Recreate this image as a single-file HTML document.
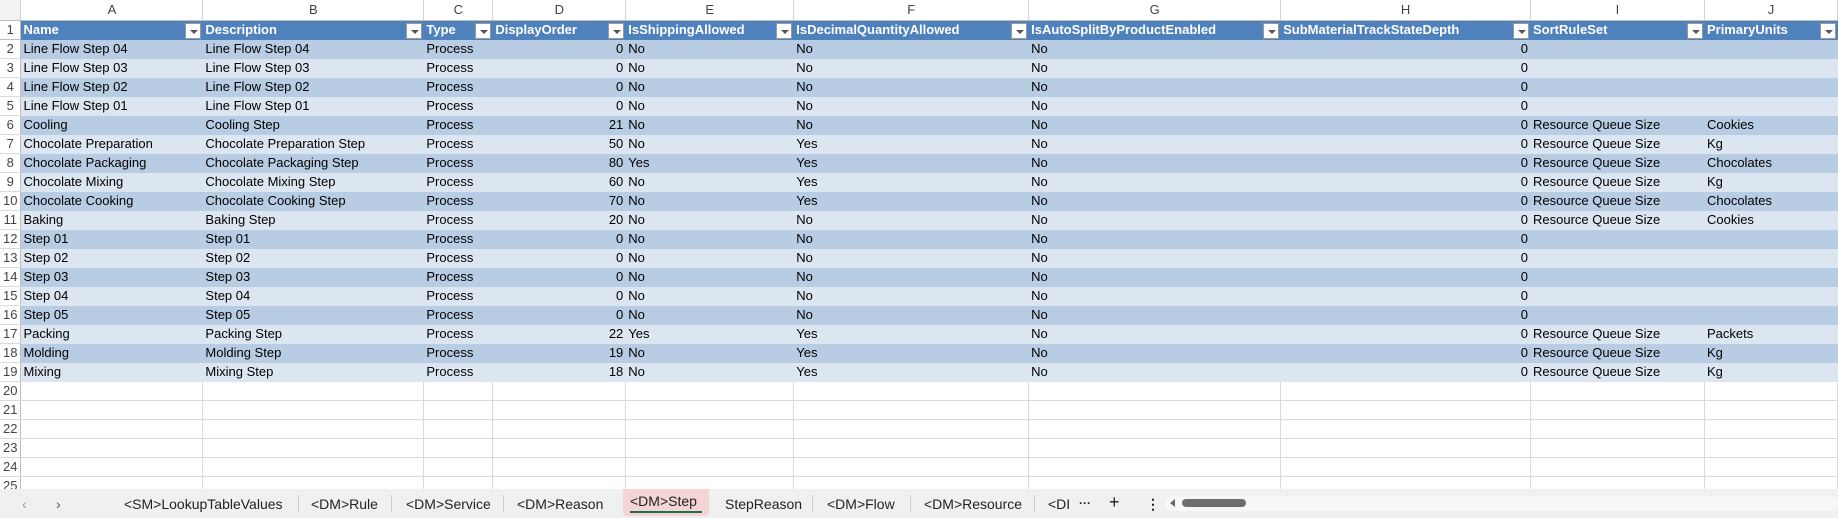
<!DOCTYPE html><html><head><meta charset="utf-8"><style>
*{margin:0;padding:0;box-sizing:border-box}
body{width:1838px;height:518px;overflow:hidden;background:#fff;font-family:"Liberation Sans",sans-serif;position:relative}
.g{position:absolute;left:0;top:0}
table{border-collapse:collapse;table-layout:fixed}
td{height:19px;font-size:13px;white-space:nowrap;overflow:hidden;padding:0 2px;color:#000;border-right:1px solid #dadada;border-bottom:1px solid #dadada;position:relative}
tr.ch td{height:20px;background:#fff;color:#444;text-align:center;font-size:13px;border-right:1px solid #d4d4d4;border-bottom:1px solid #bdbdbd}
td.rn{background:#fff;color:#444;text-align:center;padding:0;border-right:1px solid #bdbdbd}
tr.h td{background:#4f81bd;color:#fff;font-weight:bold;border-color:#4f81bd}
tr.h td.rn{background:#fff;color:#444;font-weight:normal;border-color:#bdbdbd}
tr.a td{background:#b8cce4;border-color:#b8cce4}
tr.b td{background:#dce6f1;border-color:#dce6f1}
tr.a td.rn,tr.b td.rn{background:#fff;border-right-color:#bdbdbd;border-bottom-color:#dadada}
.r{text-align:right}
.dd{position:absolute;right:1px;top:2px;width:16px;height:16px;background:#fff;border:1px solid #999}
.dd:after{content:"";position:absolute;left:4px;top:6px;border-left:4px solid transparent;border-right:4px solid transparent;border-top:4px solid #555}
.tb{position:absolute;left:0;top:489px;width:1838px;height:29px;background:#f0f0f0;font-size:14px;color:#222}
.tb span{position:absolute;top:7px}
.sep{position:absolute;top:6px;width:1px;height:17px;background:#ccc}
</style></head><body>
<table class="g">
<colgroup><col style="width:21px"><col style="width:182px"><col style="width:221px"><col style="width:69px"><col style="width:133px"><col style="width:168px"><col style="width:235px"><col style="width:252px"><col style="width:250px"><col style="width:174px"><col style="width:133px"></colgroup>
<tr class="ch"><td class="rn" style="background:#f3f3f3"></td><td>A</td><td>B</td><td>C</td><td>D</td><td>E</td><td>F</td><td>G</td><td>H</td><td>I</td><td>J</td></tr>
<tr class="h"><td class="rn">1</td><td>Name<i class="dd"></i></td><td>Description<i class="dd"></i></td><td>Type<i class="dd"></i></td><td>DisplayOrder<i class="dd"></i></td><td>IsShippingAllowed<i class="dd"></i></td><td>IsDecimalQuantityAllowed<i class="dd"></i></td><td>IsAutoSplitByProductEnabled<i class="dd"></i></td><td>SubMaterialTrackStateDepth<i class="dd"></i></td><td>SortRuleSet<i class="dd"></i></td><td>PrimaryUnits<i class="dd"></i></td></tr>
<tr class="a"><td class="rn">2</td><td>Line Flow Step 04</td><td>Line Flow Step 04</td><td>Process</td><td class="r">0</td><td>No</td><td>No</td><td>No</td><td class="r">0</td><td></td><td></td></tr>
<tr class="b"><td class="rn">3</td><td>Line Flow Step 03</td><td>Line Flow Step 03</td><td>Process</td><td class="r">0</td><td>No</td><td>No</td><td>No</td><td class="r">0</td><td></td><td></td></tr>
<tr class="a"><td class="rn">4</td><td>Line Flow Step 02</td><td>Line Flow Step 02</td><td>Process</td><td class="r">0</td><td>No</td><td>No</td><td>No</td><td class="r">0</td><td></td><td></td></tr>
<tr class="b"><td class="rn">5</td><td>Line Flow Step 01</td><td>Line Flow Step 01</td><td>Process</td><td class="r">0</td><td>No</td><td>No</td><td>No</td><td class="r">0</td><td></td><td></td></tr>
<tr class="a"><td class="rn">6</td><td>Cooling</td><td>Cooling Step</td><td>Process</td><td class="r">21</td><td>No</td><td>No</td><td>No</td><td class="r">0</td><td>Resource Queue Size</td><td>Cookies</td></tr>
<tr class="b"><td class="rn">7</td><td>Chocolate Preparation</td><td>Chocolate Preparation Step</td><td>Process</td><td class="r">50</td><td>No</td><td>Yes</td><td>No</td><td class="r">0</td><td>Resource Queue Size</td><td>Kg</td></tr>
<tr class="a"><td class="rn">8</td><td>Chocolate Packaging</td><td>Chocolate Packaging Step</td><td>Process</td><td class="r">80</td><td>Yes</td><td>Yes</td><td>No</td><td class="r">0</td><td>Resource Queue Size</td><td>Chocolates</td></tr>
<tr class="b"><td class="rn">9</td><td>Chocolate Mixing</td><td>Chocolate Mixing Step</td><td>Process</td><td class="r">60</td><td>No</td><td>Yes</td><td>No</td><td class="r">0</td><td>Resource Queue Size</td><td>Kg</td></tr>
<tr class="a"><td class="rn">10</td><td>Chocolate Cooking</td><td>Chocolate Cooking Step</td><td>Process</td><td class="r">70</td><td>No</td><td>Yes</td><td>No</td><td class="r">0</td><td>Resource Queue Size</td><td>Chocolates</td></tr>
<tr class="b"><td class="rn">11</td><td>Baking</td><td>Baking Step</td><td>Process</td><td class="r">20</td><td>No</td><td>No</td><td>No</td><td class="r">0</td><td>Resource Queue Size</td><td>Cookies</td></tr>
<tr class="a"><td class="rn">12</td><td>Step 01</td><td>Step 01</td><td>Process</td><td class="r">0</td><td>No</td><td>No</td><td>No</td><td class="r">0</td><td></td><td></td></tr>
<tr class="b"><td class="rn">13</td><td>Step 02</td><td>Step 02</td><td>Process</td><td class="r">0</td><td>No</td><td>No</td><td>No</td><td class="r">0</td><td></td><td></td></tr>
<tr class="a"><td class="rn">14</td><td>Step 03</td><td>Step 03</td><td>Process</td><td class="r">0</td><td>No</td><td>No</td><td>No</td><td class="r">0</td><td></td><td></td></tr>
<tr class="b"><td class="rn">15</td><td>Step 04</td><td>Step 04</td><td>Process</td><td class="r">0</td><td>No</td><td>No</td><td>No</td><td class="r">0</td><td></td><td></td></tr>
<tr class="a"><td class="rn">16</td><td>Step 05</td><td>Step 05</td><td>Process</td><td class="r">0</td><td>No</td><td>No</td><td>No</td><td class="r">0</td><td></td><td></td></tr>
<tr class="b"><td class="rn">17</td><td>Packing</td><td>Packing Step</td><td>Process</td><td class="r">22</td><td>Yes</td><td>Yes</td><td>No</td><td class="r">0</td><td>Resource Queue Size</td><td>Packets</td></tr>
<tr class="a"><td class="rn">18</td><td>Molding</td><td>Molding Step</td><td>Process</td><td class="r">19</td><td>No</td><td>Yes</td><td>No</td><td class="r">0</td><td>Resource Queue Size</td><td>Kg</td></tr>
<tr class="b"><td class="rn">19</td><td>Mixing</td><td>Mixing Step</td><td>Process</td><td class="r">18</td><td>No</td><td>Yes</td><td>No</td><td class="r">0</td><td>Resource Queue Size</td><td>Kg</td></tr>
<tr><td class="rn">20</td><td></td><td></td><td></td><td></td><td></td><td></td><td></td><td></td><td></td><td></td></tr>
<tr><td class="rn">21</td><td></td><td></td><td></td><td></td><td></td><td></td><td></td><td></td><td></td><td></td></tr>
<tr><td class="rn">22</td><td></td><td></td><td></td><td></td><td></td><td></td><td></td><td></td><td></td><td></td></tr>
<tr><td class="rn">23</td><td></td><td></td><td></td><td></td><td></td><td></td><td></td><td></td><td></td><td></td></tr>
<tr><td class="rn">24</td><td></td><td></td><td></td><td></td><td></td><td></td><td></td><td></td><td></td><td></td></tr>
<tr><td class="rn">25</td><td></td><td></td><td></td><td></td><td></td><td></td><td></td><td></td><td></td><td></td></tr>
</table>
<div class="tb">
<span style="left:22px;color:#999">&#x2039;</span><span style="left:56px;color:#555">&#x203A;</span>
<span style="left:124px">&lt;SM&gt;LookupTableValues</span><div class="sep" style="left:298px"></div>
<span style="left:311px">&lt;DM&gt;Rule</span><div class="sep" style="left:391px"></div>
<span style="left:406px">&lt;DM&gt;Service</span><div class="sep" style="left:503px"></div>
<span style="left:517px">&lt;DM&gt;Reason</span>
<div style="position:absolute;left:623px;top:0;width:86px;height:27px;background:#f4d4d4;border-radius:0 0 4px 4px"></div>
<span style="left:630px;top:4px">&lt;DM&gt;Step</span>
<div style="position:absolute;left:630px;top:22px;width:72px;height:2px;background:#1e7145"></div>
<span style="left:725px">StepReason</span><div class="sep" style="left:812px"></div>
<span style="left:827px">&lt;DM&gt;Flow</span><div class="sep" style="left:910px"></div>
<span style="left:924px">&lt;DM&gt;Resource</span><div class="sep" style="left:1034px"></div>
<span style="left:1048px">&lt;DI</span>
<span style="left:1079px;font-weight:bold;font-size:12px">&middot;&middot;&middot;</span>
<span style="left:1109px;font-size:18px;top:3px">+</span>
<span style="left:1146px;font-weight:bold">&#x22EE;</span>
<div style="position:absolute;left:1165px;top:7px;width:673px;height:15px;background:#f7f7f7;border-radius:7px"></div>
<div style="position:absolute;left:1170px;top:10px;border-top:4px solid transparent;border-bottom:4px solid transparent;border-right:5px solid #666"></div>
<div style="position:absolute;left:1182px;top:10px;width:64px;height:8px;background:#6e6e6e;border-radius:4px"></div>
</div>
</body></html>
